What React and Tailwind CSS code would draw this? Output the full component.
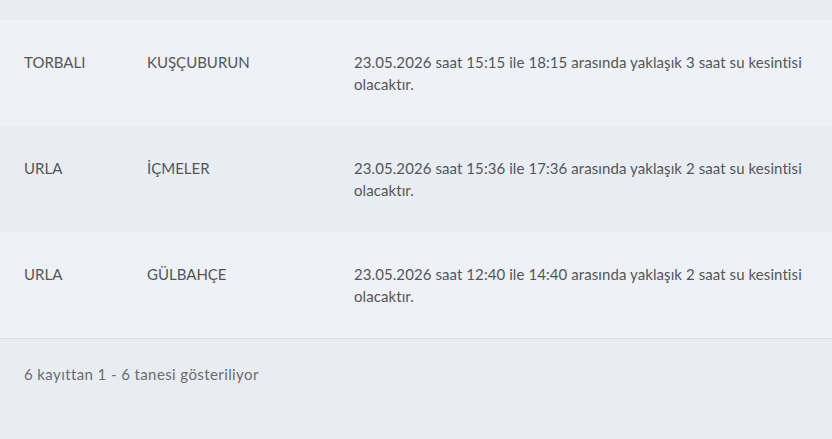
const rows = [
  {
    ilce: "TORBALI",
    mahalle: "KUŞÇUBURUN",
    aciklama: "23.05.2026 saat 15:15 ile 18:15 arasında yaklaşık 3 saat su kesintisi olacaktır.",
  },
  {
    ilce: "URLA",
    mahalle: "İÇMELER",
    aciklama: "23.05.2026 saat 15:36 ile 17:36 arasında yaklaşık 2 saat su kesintisi olacaktır.",
  },
  {
    ilce: "URLA",
    mahalle: "GÜLBAHÇE",
    aciklama: "23.05.2026 saat 12:40 ile 14:40 arasında yaklaşık 2 saat su kesintisi olacaktır.",
  },
];

const App = () => {
  return (
    <div
      className="w-[832px] h-[439px] overflow-hidden bg-[#e8ecf3] text-[#54565a] text-[15px] leading-[22px]"
      style={{ fontFamily: "Lato, 'Open Sans', sans-serif" }}
    >
      {/* top strip of previous row */}
      <div className="h-[20px]" />

      {/* table rows */}
      <div className="border-b border-[#dadee6]">
        {rows.map((row, i) => (
          <div
            key={i}
            className={`flex px-[24px] py-[31px] ${i % 2 === 0 ? "bg-[#eef1f6]" : "bg-[#e8ecf3]"}`}
          >
            <div className="w-[123px] shrink-0">{row.ilce}</div>
            <div className="w-[207px] shrink-0">{row.mahalle}</div>
            <div className="w-[460px] tracking-[0.08px]">{row.aciklama}</div>
          </div>
        ))}
      </div>

      {/* footer */}
      <div className="px-[24px] pt-[24px] text-[#6a6c70] tracking-[0.4px]">
        6 kayıttan 1 - 6 tanesi gösteriliyor
      </div>
    </div>
  );
};

export default App;
